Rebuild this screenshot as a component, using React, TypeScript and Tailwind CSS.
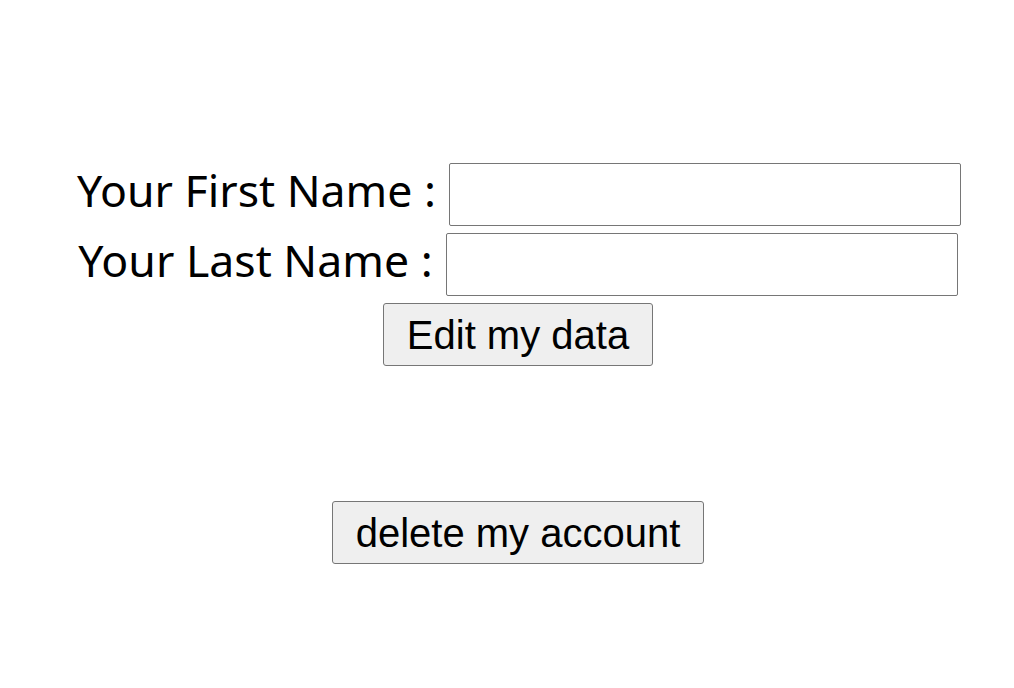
import React from "react";

export default function App() {
  return (
    <div className="w-[1014px] h-[688px] bg-white flex flex-col items-center pt-[163px] pl-[22px]">
      <div className="flex items-center h-[63px] pl-[2px]">
        <span className="text-[44.6px] text-black leading-none pb-[8px] [font-family:'Noto_Sans',sans-serif] mr-[13px]">Your First Name :</span>
        <input className="w-[512px] h-[63px] border border-[#767676] rounded-[2px] bg-white" />
      </div>
      <div className="flex items-center h-[63px] mt-[7px]">
        <span className="text-[44.6px] text-black leading-none pb-[8px] [font-family:'Noto_Sans',sans-serif] mr-[13px]">Your Last Name :</span>
        <input className="w-[512px] h-[63px] border border-[#767676] rounded-[2px] bg-white" />
      </div>
      <button className="mt-[7px] w-[270px] h-[63px] bg-[#efefef] border border-[#767676] rounded-[3px] text-[40px] text-black leading-none [font-family:'Liberation_Sans',Arial,sans-serif]">Edit my data</button>
      <button className="mt-[135px] w-[372px] h-[63px] bg-[#efefef] border border-[#767676] rounded-[3px] text-[40px] text-black leading-none [font-family:'Liberation_Sans',Arial,sans-serif]">delete my account</button>
    </div>
  );
}
